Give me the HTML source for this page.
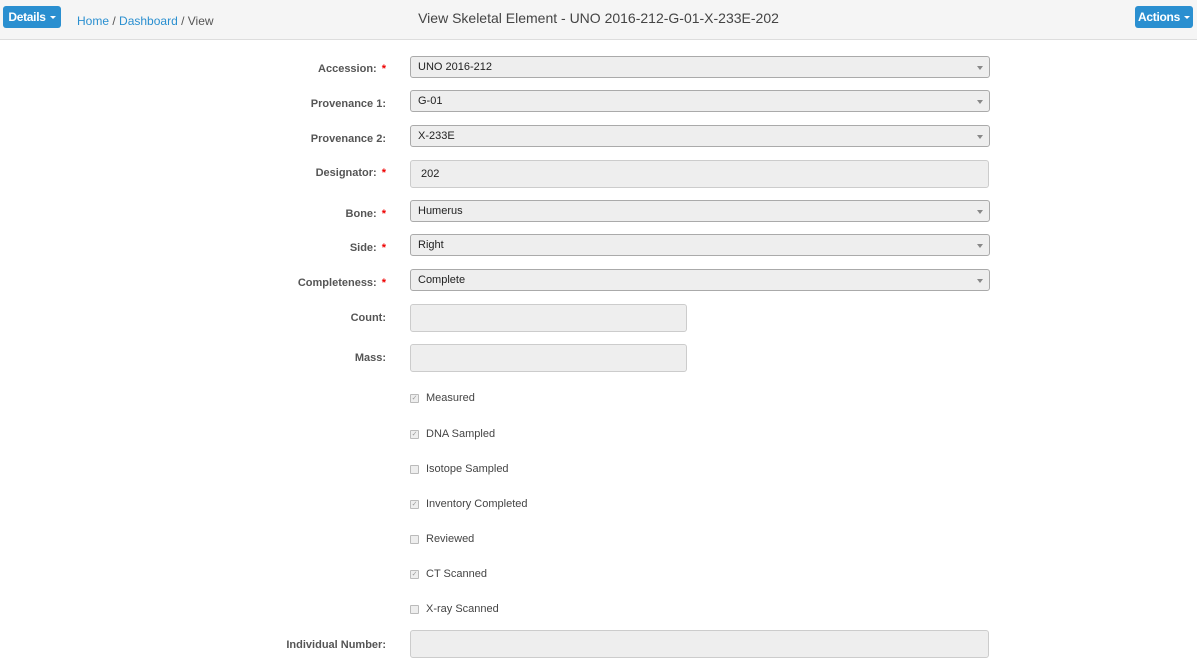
<!DOCTYPE html>
<html><head><meta charset="utf-8"><style>
body{margin:0;width:1201px;height:668px;background:#fff;font-family:"Liberation Sans",sans-serif;font-size:11px;color:#333;position:relative;overflow:hidden}
.hdr{position:absolute;left:0;top:0;width:1197px;height:39px;background:#f5f5f5;border-bottom:1px solid #ddd}
.btn{position:absolute;top:6px;height:22px;background:#2a8fd0;color:#fff;border-radius:3px;font-weight:bold;font-size:12px;line-height:22px;white-space:nowrap;text-align:center;box-sizing:border-box;letter-spacing:-0.3px}
.car{display:inline-block;border-left:3px solid transparent;border-right:3px solid transparent;border-top:3px solid #fff;vertical-align:middle;margin-left:4px}
.bc{position:absolute;left:77px;top:14px;font-size:12px;color:#555}
.bc a{color:#2a8fd0}
.title{position:absolute;left:0;width:1197px;top:10px;text-align:center;font-size:14px;color:#444}
.lbl{position:absolute;right:815px;font-weight:bold;color:#555;text-align:right}
.st{color:#e00;margin-left:5px}
.sel{position:absolute;left:410px;width:580px;height:22px;box-sizing:border-box;border:1px solid #aaa;border-radius:3px;background:#eee;padding-left:7px;line-height:20px;color:#222}
.sel:after{content:"";position:absolute;right:6px;top:9px;border-left:3px solid transparent;border-right:3px solid transparent;border-top:4px solid #888}
.inp{position:absolute;left:410px;height:28px;box-sizing:border-box;border:1px solid #ccc;border-radius:3px;background:#eee;padding-left:10px;line-height:26px;color:#222}
.cb{position:absolute;left:410px;color:#444}
.cb i{position:absolute;left:0;top:2px;width:7px;height:7px;border:1px solid #bbb;border-radius:1px;background:#eee;font-style:normal;font-size:7px;line-height:7px;color:#999;text-align:center}
.cb span{position:absolute;left:16px;white-space:nowrap}
</style></head><body>
<div class="hdr"></div>
<div class="btn" style="left:3px;width:58px">Details<span class="car"></span></div>
<div class="bc"><a>Home</a> / <a>Dashboard</a> / View</div>
<div class="title">View Skeletal Element - UNO 2016-212-G-01-X-233E-202</div>
<div class="btn" style="left:1135px;width:58px">Actions<span class="car"></span></div>

<div class="lbl" style="top:63px">Accession:<span class="st">*</span></div>
<div class="sel" style="top:56px">UNO 2016-212</div>
<div class="lbl" style="top:98px">Provenance 1:</div>
<div class="sel" style="top:90px">G-01</div>
<div class="lbl" style="top:133px">Provenance 2:</div>
<div class="sel" style="top:125px">X-233E</div>
<div class="lbl" style="top:167px">Designator:<span class="st">*</span></div>
<div class="inp" style="top:160px;width:579px">202</div>
<div class="lbl" style="top:208px">Bone:<span class="st">*</span></div>
<div class="sel" style="top:200px">Humerus</div>
<div class="lbl" style="top:242px">Side:<span class="st">*</span></div>
<div class="sel" style="top:234px">Right</div>
<div class="lbl" style="top:277px">Completeness:<span class="st">*</span></div>
<div class="sel" style="top:269px">Complete</div>
<div class="lbl" style="top:312px">Count:</div>
<div class="inp" style="top:304px;width:277px"></div>
<div class="lbl" style="top:352px">Mass:</div>
<div class="inp" style="top:344px;width:277px"></div>

<div class="cb" style="top:392px"><i>✓</i><span>Measured</span></div>
<div class="cb" style="top:428px"><i>✓</i><span>DNA Sampled</span></div>
<div class="cb" style="top:463px"><i></i><span>Isotope Sampled</span></div>
<div class="cb" style="top:498px"><i>✓</i><span>Inventory Completed</span></div>
<div class="cb" style="top:533px"><i></i><span>Reviewed</span></div>
<div class="cb" style="top:568px"><i>✓</i><span>CT Scanned</span></div>
<div class="cb" style="top:603px"><i></i><span>X-ray Scanned</span></div>

<div class="lbl" style="top:639px">Individual Number:</div>
<div class="inp" style="top:630px;width:579px"></div>
</body></html>
